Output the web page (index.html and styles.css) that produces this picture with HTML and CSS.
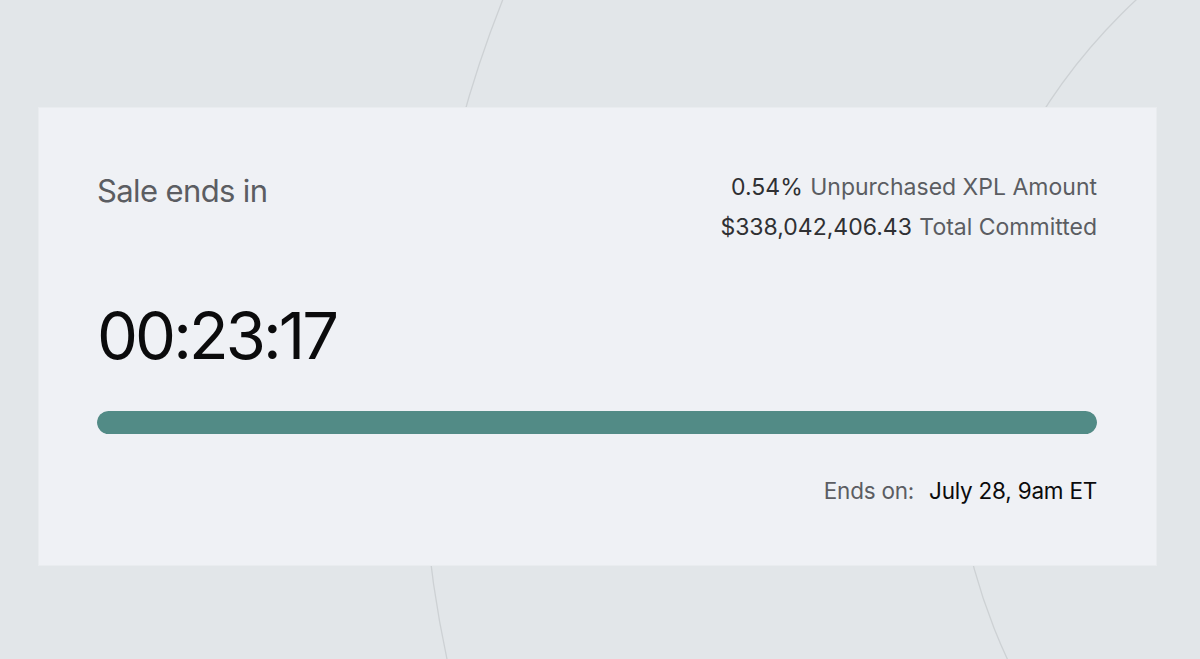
FILE: index.html
```html
<!DOCTYPE html>
<html>

<head>
    <link rel="stylesheet" href="styles.css">
</head>

<body>
    <svg class="rings" width="1200" height="659" viewBox="0 0 1200 659">
        <circle cx="1561" cy="421" r="1139"></circle>
        <circle cx="1525" cy="418" r="571"></circle>
    </svg>

    <div class="card">
        <div class="top">
            <div class="title">Sale ends in</div>
            <div class="stats">
                <div class="stat"><span class="num">0.54%</span> Unpurchased XPL Amount</div>
                <div class="stat"><span class="num">$338,042,406.43</span> Total Committed</div>
            </div>
        </div>

        <div class="timer">00:23:17</div>

        <div class="bar">
            <div class="fill" style="width: 100%"></div>
        </div>

        <div class="ends">
            <span class="label">Ends on:</span>
            <span class="date">July 28, 9am ET</span>
        </div>
    </div>
</body>

</html>
```

FILE: styles.css
```css
* {
    padding: 0;
    margin: 0;
    box-sizing: border-box;
}

body {
    width: 1200px;
    height: 659px;
    overflow: hidden;
    background: #e2e6e9;
    font-family: Inter, "Noto Sans", sans-serif;
    padding: 108px 44px 0 39px;
    position: relative;
}

.rings {
    position: absolute;
    left: 0;
    top: 0;
}

.rings circle {
    fill: none;
    stroke: #cdd1d4;
    stroke-width: 1.3;
}

.card {
    position: relative;
    height: 457px;
    background: #eff1f5;
    box-shadow: 0 0 0 1px #e9ecef;
    padding: 59px 59px 0 58px;
    display: flex;
    flex-direction: column;
}

.top {
    display: flex;
    justify-content: space-between;
    align-items: flex-start;
    height: 74px;
}

.title {
    font-size: 31px;
    letter-spacing: -0.02em;
    color: #5b5d62;
    line-height: 40px;
    padding-top: 4px;
}

.stats {
    text-align: right;
    font-size: 23px;
    line-height: 40px;
    color: #5b5d62;
}

.num {
    color: #2f3033;
    margin-right: 1px;
}

.timer {
    margin-top: 55px;
    font-size: 65px;
    line-height: 80px;
    letter-spacing: -0.045em;
    color: #0b0b0c;
}

.bar {
    margin-top: 35px;
    height: 23px;
    border-radius: 12px;
    background: #d5dadd;
    overflow: hidden;
}

.fill {
    height: 100%;
    background: #528b86;
    border-radius: 12px;
}

.ends {
    margin-top: 42px;
    display: flex;
    justify-content: flex-end;
    gap: 15px;
    font-size: 22.5px;
    line-height: 30px;
    letter-spacing: -0.01em;
}

.ends .label {
    color: #5b5d62;
}

.ends .date {
    color: #0b0b0c;
}
```
